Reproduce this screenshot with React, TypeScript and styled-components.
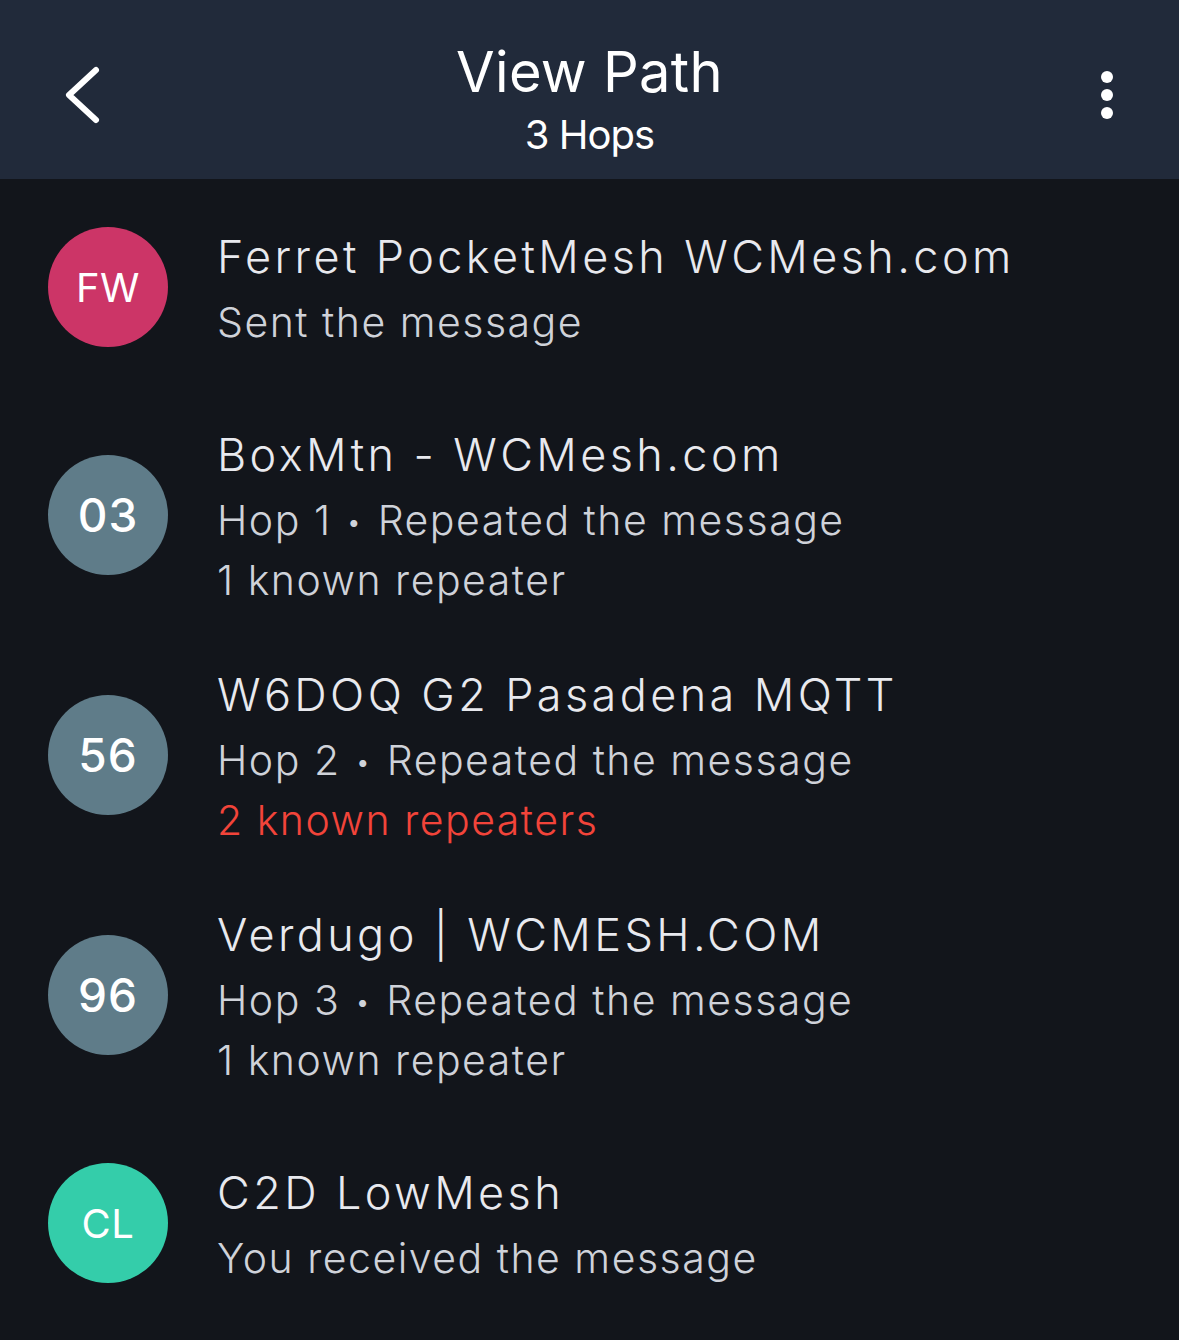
import React from "react";
import styled, { createGlobalStyle } from "styled-components";

const GlobalStyle = createGlobalStyle`
  html, body {
    margin: 0;
    padding: 0;
    background: #12151b;
  }
  body {
    font-family: Inter, "Noto Sans", sans-serif;
    -webkit-font-smoothing: antialiased;
  }
`;

const Screen = styled.div`
  width: 1179px;
  min-height: 1340px;
  background: #12151b;
  display: flex;
  flex-direction: column;
`;

const Header = styled.header`
  height: 179px;
  background: #212a3a;
  display: grid;
  grid-template-columns: 180px 1fr 180px;
  align-items: stretch;
  color: #fff;
`;

const IconButton = styled.button<{ $align: "start" | "end" }>`
  background: none;
  border: 0;
  padding: 11px 0 0;
  display: flex;
  align-items: center;
  justify-content: ${(p) => (p.$align === "start" ? "flex-start" : "flex-end")};
  padding-left: ${(p) => (p.$align === "start" ? "62px" : "0")};
  padding-right: ${(p) => (p.$align === "end" ? "65px" : "0")};
  color: #fff;
  cursor: pointer;
`;

const TitleBlock = styled.div`
  display: flex;
  flex-direction: column;
  align-items: center;
  padding-top: 37px;
`;

const Title = styled.h1`
  margin: 0;
  font-size: 56px;
  line-height: 70px;
  font-weight: 400;
  letter-spacing: 0.3px;
`;

const Subtitle = styled.div`
  margin-top: 3px;
  font-size: 40px;
  line-height: 50px;
  font-weight: 400;
  letter-spacing: -1px;
`;

const List = styled.ul`
  list-style: none;
  margin: 0;
  padding: 0;
`;

const Row = styled.li`
  min-height: 216px;
  box-sizing: border-box;
  padding: 25px 0 25px 48px;
  display: flex;
  align-items: center;
  gap: 49px;
`;

const Avatar = styled.div<{ $color: string; $numeric?: boolean }>`
  flex: none;
  width: 120px;
  height: 120px;
  border-radius: 50%;
  background: ${(p) => p.$color};
  color: #fff;
  display: flex;
  align-items: center;
  justify-content: center;
  font-size: ${(p) => (p.$numeric ? "46px" : "40px")};
  font-weight: ${(p) => (p.$numeric ? 500 : 400)};
  letter-spacing: ${(p) => (p.$numeric ? "1px" : "0.5px")};
`;

const Info = styled.div`
  display: flex;
  flex-direction: column;
`;

const Name = styled.div`
  font-size: 45px;
  line-height: 70px;
  font-weight: 300;
  color: #e8e9ee;
  letter-spacing: 3.4px;
`;

const Line = styled.div<{ $warn?: boolean }>`
  font-size: 41px;
  line-height: 60px;
  font-weight: 300;
  color: ${(p) => (p.$warn ? "#f2443a" : "#cfd2d9")};
  letter-spacing: 1.5px;
`;

const Dot = styled.span`
  display: inline-block;
  margin: 0 15px;
  font-size: 26px;
  line-height: 0;
  vertical-align: 4px;
`;

type Hop = {
  initials: string;
  color: string;
  name: string;
  numeric?: boolean;
  hop?: number;
  status: string;
  repeaters?: number;
};

const hops: Hop[] = [
  { initials: "FW", color: "#cc3567", name: "Ferret PocketMesh WCMesh.com", status: "Sent the message" },
  { initials: "03", color: "#5f7c89", numeric: true, name: "BoxMtn - WCMesh.com", hop: 1, status: "Repeated the message", repeaters: 1 },
  { initials: "56", color: "#5f7c89", numeric: true, name: "W6DOQ G2 Pasadena MQTT", hop: 2, status: "Repeated the message", repeaters: 2 },
  { initials: "96", color: "#5f7c89", numeric: true, name: "Verdugo | WCMESH.COM", hop: 3, status: "Repeated the message", repeaters: 1 },
  { initials: "CL", color: "#34cdaa", name: "C2D LowMesh", status: "You received the message" },
];

const BackIcon = () => (
  <svg width="40" height="60" viewBox="0 0 40 60" fill="none">
    <path d="M34 5 L7 30 L34 55" stroke="#fff" strokeWidth="6" strokeLinecap="round" strokeLinejoin="round" />
  </svg>
);

const MoreIcon = () => (
  <svg width="14" height="50" viewBox="0 0 14 50" fill="#fff">
    <circle cx="7" cy="7" r="6" />
    <circle cx="7" cy="25" r="6" />
    <circle cx="7" cy="43" r="6" />
  </svg>
);

export default function App() {
  return (
    <Screen>
      <GlobalStyle />
      <Header>
        <IconButton $align="start" aria-label="Back">
          <BackIcon />
        </IconButton>
        <TitleBlock>
          <Title>View Path</Title>
          <Subtitle>3 Hops</Subtitle>
        </TitleBlock>
        <IconButton $align="end" aria-label="More">
          <MoreIcon />
        </IconButton>
      </Header>
      <List>
        {hops.map((h) => (
          <Row key={h.initials}>
            <Avatar $color={h.color} $numeric={h.numeric}>
              {h.initials}
            </Avatar>
            <Info>
              <Name>{h.name}</Name>
              {h.hop ? (
                <>
                  <Line>
                    Hop {h.hop}
                    <Dot>•</Dot>
                    {h.status}
                  </Line>
                  <Line $warn={(h.repeaters ?? 0) > 1}>
                    {h.repeaters} known {h.repeaters === 1 ? "repeater" : "repeaters"}
                  </Line>
                </>
              ) : (
                <Line>{h.status}</Line>
              )}
            </Info>
          </Row>
        ))}
      </List>
    </Screen>
  );
}
